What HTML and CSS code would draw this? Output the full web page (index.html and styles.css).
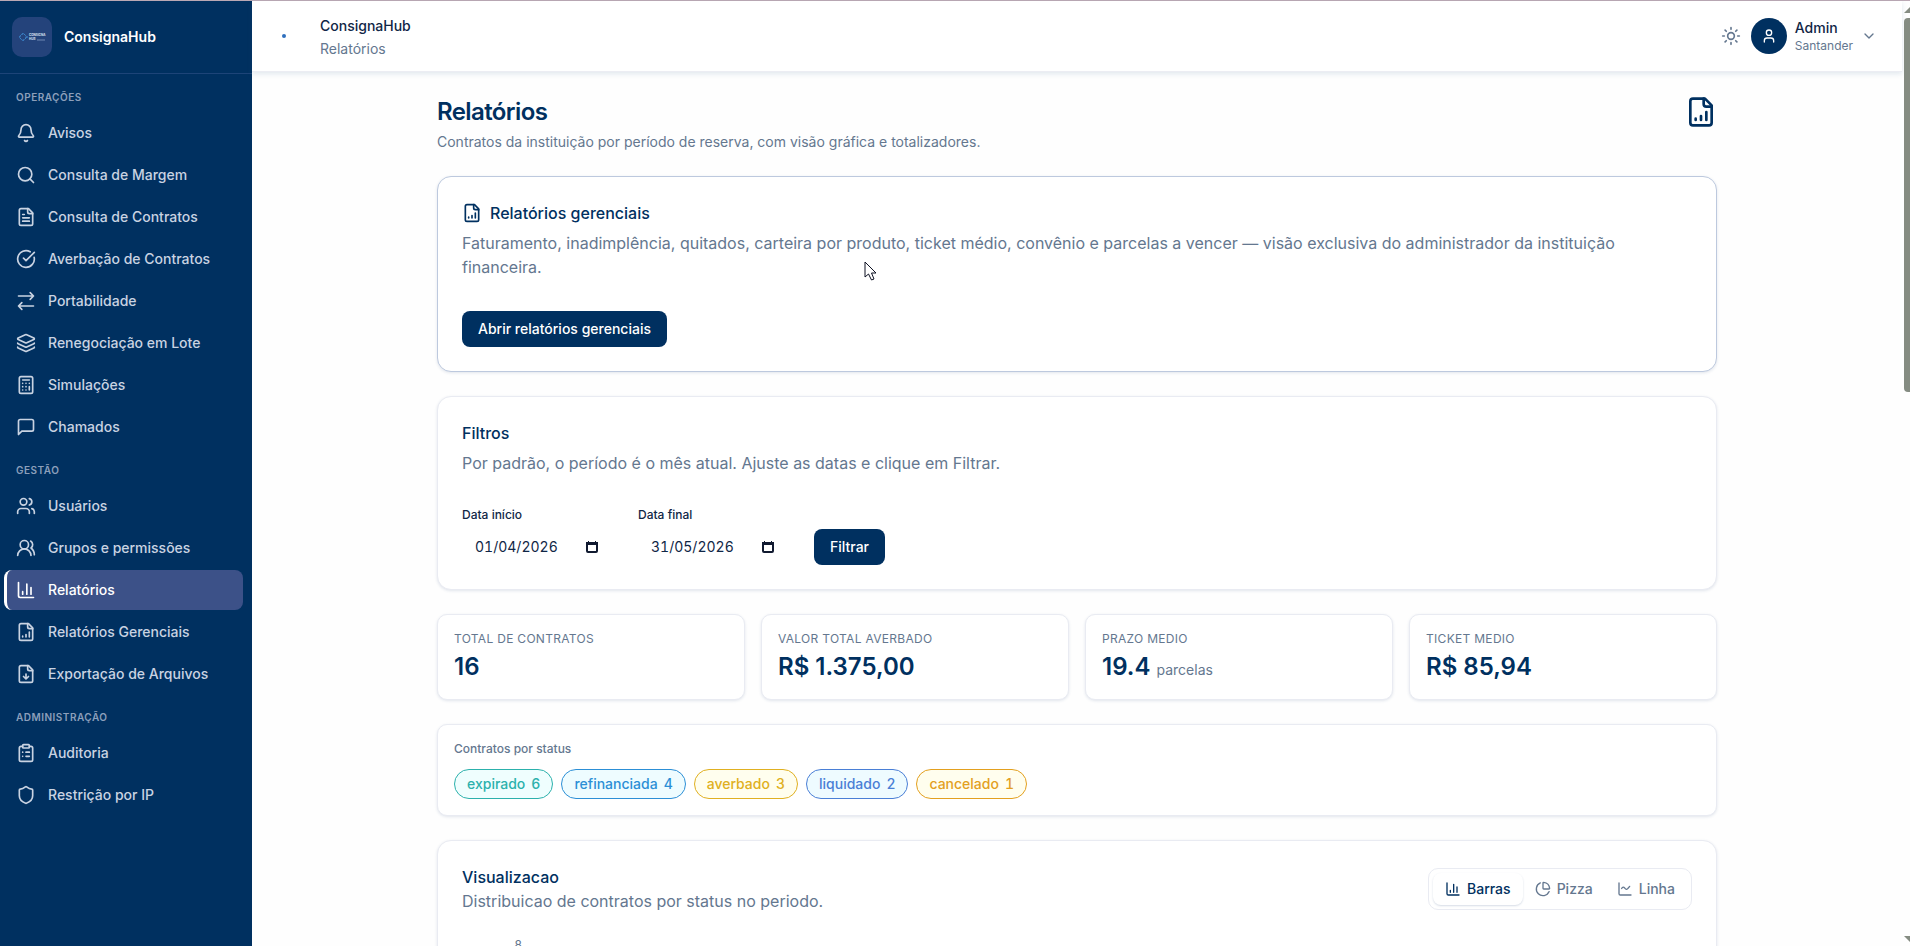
FILE: index.html
```html
<!DOCTYPE html>
<html lang="pt-BR">
<head>
  <meta charset="UTF-8">
  <meta name="viewport" content="width=device-width, initial-scale=1.0">
  <title>ConsignaHub - Relatórios</title>
  <link rel="stylesheet" href="styles.css">
</head>
<body>
  <svg class="sprite" aria-hidden="true">
    <symbol id="i-bell" viewBox="0 0 24 24"><path d="M10.268 21a2 2 0 0 0 3.464 0"/><path d="M3.262 15.326A1 1 0 0 0 4 17h16a1 1 0 0 0 .74-1.673C19.41 13.956 18 12.499 18 8A6 6 0 0 0 6 8c0 4.499-1.411 5.956-2.738 7.326"/></symbol>
    <symbol id="i-search" viewBox="0 0 24 24"><circle cx="11" cy="11" r="8"/><path d="m21 21-4.3-4.3"/></symbol>
    <symbol id="i-file" viewBox="0 0 24 24"><path d="M15 2H6a2 2 0 0 0-2 2v16a2 2 0 0 0 2 2h12a2 2 0 0 0 2-2V7Z"/><path d="M14 2v4a2 2 0 0 0 2 2h4"/></symbol>
    <symbol id="i-file-text" viewBox="0 0 24 24"><use href="#i-file"/><path d="M10 9H8M16 13H8M16 17H8"/></symbol>
    <symbol id="i-file-chart" viewBox="0 0 24 24"><use href="#i-file"/><path d="M8 18v-1M12 18v-3M16 18v-6"/></symbol>
    <symbol id="i-file-down" viewBox="0 0 24 24"><use href="#i-file"/><path d="M12 18v-6M9 15l3 3 3-3"/></symbol>
    <symbol id="i-check" viewBox="0 0 24 24"><path d="M21.801 10A10 10 0 1 1 17 3.335"/><path d="m9 11 3 3L22 4"/></symbol>
    <symbol id="i-arrows" viewBox="0 0 24 24"><path d="m17 2 4 4-4 4M3 6h18M7 22l-4-4 4-4M21 18H3"/></symbol>
    <symbol id="i-layers" viewBox="0 0 24 24"><path d="m12.83 2.18a2 2 0 0 0-1.66 0L2.6 6.08a1 1 0 0 0 0 1.83l8.58 3.91a2 2 0 0 0 1.66 0l8.58-3.9a1 1 0 0 0 0-1.83Z"/><path d="M2 12a1 1 0 0 0 .58.91l8.6 3.91a2 2 0 0 0 1.65 0l8.58-3.9A1 1 0 0 0 22 12"/><path d="M2 17a1 1 0 0 0 .58.91l8.6 3.91a2 2 0 0 0 1.65 0l8.58-3.9A1 1 0 0 0 22 17"/></symbol>
    <symbol id="i-calc" viewBox="0 0 24 24"><rect x="4" y="2" width="16" height="20" rx="2"/><path d="M8 6h8M16 14v4M16 10h.01M12 10h.01M8 10h.01M12 14h.01M8 14h.01M12 18h.01M8 18h.01"/></symbol>
    <symbol id="i-message" viewBox="0 0 24 24"><path d="M21 15a2 2 0 0 1-2 2H7l-4 4V5a2 2 0 0 1 2-2h14a2 2 0 0 1 2 2z"/></symbol>
    <symbol id="i-users" viewBox="0 0 24 24"><path d="M16 21v-2a4 4 0 0 0-4-4H6a4 4 0 0 0-4 4v2"/><circle cx="9" cy="7" r="4"/><path d="M22 21v-2a4 4 0 0 0-3-3.87M16 3.13a4 4 0 0 1 0 7.75"/></symbol>
    <symbol id="i-users-round" viewBox="0 0 24 24"><path d="M18 21a8 8 0 0 0-16 0"/><circle cx="10" cy="8" r="5"/><path d="M22 20c0-3.37-2-6.5-4-8a5 5 0 0 0-.45-8.3"/></symbol>
    <symbol id="i-bars" viewBox="0 0 24 24"><path d="M3 3v16a2 2 0 0 0 2 2h16M13 17V5M18 17V9M8 17v-3"/></symbol>
    <symbol id="i-pie" viewBox="0 0 24 24"><path d="M21 12c.552 0 1.005-.449.95-.998a10 10 0 0 0-8.953-8.951c-.55-.055-.998.398-.998.95v8a1 1 0 0 0 1 1z"/><path d="M21.21 15.89A10 10 0 1 1 8 2.83"/></symbol>
    <symbol id="i-line" viewBox="0 0 24 24"><path d="M3 3v16a2 2 0 0 0 2 2h16"/><path d="M7 11.2c1.300-2.900 3.200-2.500 4.700-.4s3.400 2.500 4.900.1L19 8"/></symbol>
    <symbol id="i-clipboard" viewBox="0 0 24 24"><rect x="8" y="2" width="8" height="4" rx="1"/><path d="M16 4h2a2 2 0 0 1 2 2v14a2 2 0 0 1-2 2H6a2 2 0 0 1-2-2V6a2 2 0 0 1 2-2h2M12 11h4M12 16h4M8 11h.01M8 16h.01"/></symbol>
    <symbol id="i-shield" viewBox="0 0 24 24"><path d="M20 13c0 5-3.500 7.500-7.660 8.950a1 1 0 0 1-.67-.01C7.500 20.500 4 18 4 13V6a1 1 0 0 1 1-1c2 0 4.500-1.200 6.240-2.720a1.170 1.170 0 0 1 1.520 0C14.510 3.810 17 5 19 5a1 1 0 0 1 1 1z"/></symbol>
    <symbol id="i-sun" viewBox="0 0 24 24"><circle cx="12" cy="12" r="4"/><path d="M12 2v2M12 20v2M4.930 4.930l1.410 1.410M17.660 17.660l1.410 1.410M2 12h2M20 12h2M6.340 17.660l-1.410 1.410M19.070 4.930l-1.410 1.410"/></symbol>
    <symbol id="i-user" viewBox="0 0 24 24"><path d="M19 21v-2a4 4 0 0 0-4-4H9a4 4 0 0 0-4 4v2"/><circle cx="12" cy="7" r="4"/></symbol>
    <symbol id="i-chevron" viewBox="0 0 24 24"><path d="m6 9 6 6 6-6"/></symbol>
  </svg>

  <div class="app">
    <aside class="sidebar">
      <div class="brand">
        <svg class="brand-logo" viewBox="0 0 40 40" aria-hidden="true">
          <circle class="logo-ring" cx="11" cy="20" r="3"/>
          <path class="logo-rays" d="M7 20h1M14 20h2M11 16v1M11 23v1"/>
          <text x="17" y="19">CONSIGNA</text>
          <text x="17" y="23">HUB</text>
          <path class="logo-line" d="M25 23h8"/>
        </svg>
        <span>ConsignaHub</span>
      </div>
      <nav>
        <h2 class="nav-label">Operações</h2>
        <ul>
          <li><a href="#"><svg class="icon"><use href="#i-bell"/></svg>Avisos</a></li>
          <li><a href="#"><svg class="icon"><use href="#i-search"/></svg>Consulta de Margem</a></li>
          <li><a href="#"><svg class="icon"><use href="#i-file-text"/></svg>Consulta de Contratos</a></li>
          <li><a href="#"><svg class="icon"><use href="#i-check"/></svg>Averbação de Contratos</a></li>
          <li><a href="#"><svg class="icon"><use href="#i-arrows"/></svg>Portabilidade</a></li>
          <li><a href="#"><svg class="icon"><use href="#i-layers"/></svg>Renegociação em Lote</a></li>
          <li><a href="#"><svg class="icon"><use href="#i-calc"/></svg>Simulações</a></li>
          <li><a href="#"><svg class="icon"><use href="#i-message"/></svg>Chamados</a></li>
        </ul>
        <h2 class="nav-label">Gestão</h2>
        <ul>
          <li><a href="#"><svg class="icon"><use href="#i-users"/></svg>Usuários</a></li>
          <li><a href="#"><svg class="icon"><use href="#i-users-round"/></svg>Grupos e permissões</a></li>
          <li><a href="#" class="active"><svg class="icon"><use href="#i-bars"/></svg>Relatórios</a></li>
          <li><a href="#"><svg class="icon"><use href="#i-file-chart"/></svg>Relatórios Gerenciais</a></li>
          <li><a href="#"><svg class="icon"><use href="#i-file-down"/></svg>Exportação de Arquivos</a></li>
        </ul>
        <h2 class="nav-label">Administração</h2>
        <ul>
          <li><a href="#"><svg class="icon"><use href="#i-clipboard"/></svg>Auditoria</a></li>
          <li><a href="#"><svg class="icon"><use href="#i-shield"/></svg>Restrição por IP</a></li>
        </ul>
      </nav>
    </aside>

    <div class="page">
      <header class="topbar">
        <span class="dot"></span>
        <div class="crumbs">
          <strong>ConsignaHub</strong>
          <span>Relatórios</span>
        </div>
        <button class="theme" type="button" aria-label="Alternar tema"><svg class="icon"><use href="#i-sun"/></svg></button>
        <button class="account" type="button">
          <span class="avatar"><svg class="icon icon-sm"><use href="#i-user"/></svg></span>
          <span class="account-text"><b>Admin</b><small>Santander</small></span>
          <svg class="icon icon-sm"><use href="#i-chevron"/></svg>
        </button>
      </header>

      <main>
        <div class="content">
          <div class="page-title">
            <div>
              <h1>Relatórios</h1>
              <p>Contratos da instituição por período de reserva, com visão gráfica e totalizadores.</p>
            </div>
            <svg class="icon icon-lg"><use href="#i-file-chart"/></svg>
          </div>

          <section class="card card-primary">
            <h3><svg class="icon"><use href="#i-file-chart"/></svg>Relatórios gerenciais</h3>
            <p class="desc">Faturamento, inadimplência, quitados, carteira por produto, ticket médio, convênio e parcelas a vencer — visão exclusiva do administrador da instituição financeira.</p>
            <button class="btn" type="button">Abrir relatórios gerenciais</button>
          </section>

          <section class="card">
            <h3>Filtros</h3>
            <p class="desc">Por padrão, o período é o mês atual. Ajuste as datas e clique em Filtrar.</p>
            <form class="filters">
              <div class="field">
                <label for="inicio">Data início</label>
                <div class="date">
                  <input type="text" id="inicio" value="01/04/2026">
                  <button type="button" aria-label="Abrir calendário"><svg viewBox="0 0 16 16"><rect x="3" y="4" width="10" height="9" rx="1"/><path class="bar" d="M2 3h12v3H2zM4 2h1v1H4zM11 2h1v1h-1z"/></svg></button>
                </div>
              </div>
              <div class="field">
                <label for="final">Data final</label>
                <div class="date">
                  <input type="text" id="final" value="31/05/2026">
                  <button type="button" aria-label="Abrir calendário"><svg viewBox="0 0 16 16"><rect x="3" y="4" width="10" height="9" rx="1"/><path class="bar" d="M2 3h12v3H2zM4 2h1v1H4zM11 2h1v1h-1z"/></svg></button>
                </div>
              </div>
              <button class="btn" type="button">Filtrar</button>
            </form>
          </section>

          <div class="stats">
            <div class="stat"><h4>Total de contratos</h4><p>16</p></div>
            <div class="stat"><h4>Valor total averbado</h4><p>R$ 1.375,00</p></div>
            <div class="stat"><h4>Prazo medio</h4><p>19.4 <small>parcelas</small></p></div>
            <div class="stat"><h4>Ticket medio</h4><p>R$ 85,94</p></div>
          </div>

          <section class="status">
            <h4>Contratos por status</h4>
            <div class="pills">
              <span class="pill teal">expirado <span>6</span></span>
              <span class="pill sky">refinanciada <span>4</span></span>
              <span class="pill yellow">averbado <span>3</span></span>
              <span class="pill blue">liquidado <span>2</span></span>
              <span class="pill amber">cancelado <span>1</span></span>
            </div>
          </section>

          <section class="card chart-card">
            <div class="chart-head">
              <div>
                <h3>Visualizacao</h3>
                <p class="chart-desc">Distribuicao de contratos por status no periodo.</p>
              </div>
              <div class="tabs">
                <button class="selected" type="button"><svg class="icon icon-sm"><use href="#i-bars"/></svg>Barras</button>
                <button type="button"><svg class="icon icon-sm"><use href="#i-pie"/></svg>Pizza</button>
                <button type="button"><svg class="icon icon-sm"><use href="#i-line"/></svg>Linha</button>
              </div>
            </div>
            <div class="axis">8</div>
          </section>
        </div>
      </main>
    </div>

    <div class="scrollbar" aria-hidden="true">
      <i class="arrow up"></i>
      <i class="thumb"></i>
      <i class="arrow down"></i>
    </div>
  </div>

  <svg class="pointer" viewBox="0 0 13 20" aria-hidden="true"><path d="M1 1v15l3.500-3 3 6 2.500-1-2.500-6H12z"/></svg>
</body>
</html>
```

FILE: styles.css
```css
:root {
  --navy: #003060;
  --ink: #102646;
  --muted: #64778f;
  --line: #e9ebf2;
}
* { box-sizing: border-box; }
body {
  margin: 0;
  font-family: Inter, "Liberation Sans", sans-serif;
  font-size: 14px;
  line-height: 20px;
  color: var(--ink);
  background: #fefefe;
  overflow: hidden;
}
h1, h2, h3, h4, p, ul { margin: 0; padding: 0; }
button, input { font: inherit; color: inherit; }
button {
  border: 0;
  background: none;
  padding: 0;
  cursor: pointer;
}
.sprite { display: none; }
.icon {
  width: 20px;
  height: 20px;
  flex: none;
  fill: none;
  stroke: currentColor;
  stroke-width: 2;
  stroke-linecap: round;
  stroke-linejoin: round;
}
.icon-sm { width: 16px; height: 16px; }
.icon-lg { width: 32px; height: 32px; color: var(--navy); }

.app {
  display: flex;
  height: 100vh;
  border-top: 1px solid #bba8b4;
}

/* sidebar */
.sidebar {
  width: 252px;
  flex: none;
  background: var(--navy);
  color: #c9d3e2;
}
.brand {
  display: flex;
  align-items: center;
  gap: 12px;
  height: 73px;
  padding: 0 12px;
  border-bottom: 1px solid #1d4478;
  color: #fff;
  font-weight: 600;
}
.brand-logo {
  width: 40px;
  height: 40px;
  border-radius: 10px;
  background: #24437b;
  fill: none;
}
.brand-logo text { fill: #dbe4f2; font-size: 3px; font-weight: 700; }
.logo-ring { stroke: #3f8fd6; stroke-width: 1; stroke-dasharray: 2 1; }
.logo-rays { stroke: #3f8fd6; }
.logo-line { stroke: #6f88b3; }
.nav-label {
  padding: 15px 16px 8px;
  font-size: 10px;
  line-height: 16px;
  font-weight: 600;
  letter-spacing: 0.05em;
  text-transform: uppercase;
  color: #8c9fbb;
}
.sidebar ul {
  display: flex;
  flex-direction: column;
  gap: 2px;
  padding: 0 9px 0 4px;
  list-style: none;
}
.sidebar a {
  display: flex;
  align-items: center;
  gap: 12px;
  height: 40px;
  padding: 0 9px;
  border-left: 3px solid transparent;
  border-radius: 8px;
  color: inherit;
  font-weight: 500;
  text-decoration: none;
}
.sidebar a.active {
  background: #3c5188;
  border-color: #fff;
  color: #fff;
}

/* top bar */
.page {
  flex: 1;
  min-width: 0;
  display: flex;
  flex-direction: column;
}
.topbar {
  display: flex;
  align-items: center;
  height: 71px;
  padding: 0 25px 0 30px;
  flex: none;
  border-bottom: 1px solid #ecedf3;
  box-shadow: 0 2px 5px rgba(60, 110, 150, 0.15);
  background: #fff;
}
.dot {
  width: 4px;
  height: 4px;
  border-radius: 50%;
  background: #2f6fbd;
}
.crumbs {
  display: flex;
  flex-direction: column;
  gap: 3px;
  margin: 2px auto 0 34px;
}
.crumbs strong { font-weight: 500; }
.crumbs span { color: var(--muted); }
.theme { display: flex; color: var(--muted); margin-right: 10px; }
.account {
  display: flex;
  align-items: center;
  gap: 8px;
  text-align: left;
}
.avatar {
  display: grid;
  place-items: center;
  width: 36px;
  height: 36px;
  border-radius: 50%;
  background: var(--navy);
  color: #fff;
}
.account-text { display: flex; flex-direction: column; }
.account-text b { font-weight: 500; line-height: 20px; }
.account-text small { font-size: 12px; line-height: 16px; color: var(--muted); }
.account > .icon { color: var(--muted); }

/* content */
main {
  flex: 1;
  min-height: 0;
  padding: 24px;
  overflow: hidden;
}
.content {
  display: flex;
  flex-direction: column;
  gap: 24px;
  max-width: 1280px;
  margin: 0 auto;
}
.page-title {
  display: flex;
  justify-content: space-between;
  align-items: flex-start;
}
.page-title h1 {
  font-size: 24px;
  line-height: 32px;
  font-weight: 600;
  letter-spacing: -0.025em;
  color: var(--navy);
}
.page-title p { margin-top: 4px; color: var(--muted); }
.card, .stat, .status {
  background: #fff;
  border: 1px solid var(--line);
  border-radius: 14px;
  box-shadow: 0 1px 3px rgba(50, 80, 130, 0.14);
}
.card { padding: 24px; }
.card-primary { border-color: #bdc9de; }
.card h3 {
  display: flex;
  align-items: center;
  gap: 8px;
  font-size: 16px;
  line-height: 24px;
  font-weight: 500;
  color: var(--navy);
}
.desc, .chart-desc {
  font-size: 16px;
  line-height: 24px;
  color: var(--muted);
}
.desc { margin: 6px 0 32px; }
.btn {
  height: 36px;
  padding: 0 16px;
  border-radius: 8px;
  background: var(--navy);
  color: #fff;
  font-weight: 500;
}
.filters {
  display: flex;
  align-items: flex-end;
  gap: 16px;
}
.field {
  display: flex;
  flex-direction: column;
  gap: 6px;
}
.field label { font-size: 12px; line-height: 16px; font-weight: 500; }
.date {
  display: flex;
  align-items: center;
  width: 160px;
  height: 36px;
  padding: 0 22px 0 13px;
}
.date input {
  flex: 1;
  width: 0;
  border: 0;
  padding: 0;
  background: none;
  font-variant-numeric: tabular-nums;
}
.date button { display: flex; }
.date svg { width: 16px; height: 16px; fill: none; stroke: #111a30; stroke-width: 2; }
.date .bar { fill: #111a30; stroke: none; }

.stats {
  display: grid;
  grid-template-columns: repeat(4, 1fr);
  gap: 16px;
}
.stat, .status { padding: 16px; border-radius: 10px; }
.stat h4, .status h4 {
  font-size: 12px;
  line-height: 16px;
  font-weight: 500;
  color: var(--muted);
}
.stat h4 {
  font-weight: 400;
  letter-spacing: 0.025em;
  text-transform: uppercase;
}
.stat p {
  margin-top: 4px;
  font-size: 24px;
  line-height: 32px;
  font-weight: 600;
  color: var(--navy);
}
.stat small {
  font-size: 14px;
  line-height: 20px;
  font-weight: 400;
  color: var(--muted);
}
.pills {
  display: flex;
  flex-wrap: wrap;
  gap: 8px;
  margin-top: 12px;
}
.pill {
  display: flex;
  gap: 6px;
  padding: 4px 12px;
  border: 1px solid currentColor;
  border-radius: 15px;
  font-weight: 500;
  font-variant-numeric: tabular-nums;
}
.teal { color: #2cb1ac; background: #effefe; }
.sky { color: #2c8fd6; background: #eefcff; }
.yellow { color: #e0b021; background: #fffeee; }
.blue { color: #4a7fd6; background: #eefbff; }
.amber { color: #e3a01f; background: #fffeee; }

.chart-head {
  display: flex;
  justify-content: space-between;
  align-items: center;
}
.tabs {
  display: flex;
  padding: 4px;
  border: 1px solid var(--line);
  border-radius: 10px;
}
.tabs button {
  display: flex;
  align-items: center;
  gap: 6px;
  height: 32px;
  padding: 0 12px;
  border-radius: 8px;
  color: var(--muted);
  font-weight: 500;
}
.tabs .selected {
  color: var(--navy);
  box-shadow: 0 1px 2px rgba(50, 80, 130, 0.2);
}
.axis {
  width: 60px;
  margin-top: 24px;
  font-size: 12px;
  line-height: 16px;
  text-align: right;
  color: var(--muted);
}

.scrollbar {
  display: flex;
  flex-direction: column;
  align-items: flex-end;
  width: 8px;
  flex: none;
  padding: 6px 0 4px;
}
.thumb {
  width: 6px;
  height: 40%;
  margin: 5px 0 auto;
  border-radius: 4px 0 0 4px;
  background: #858c82;
}
.arrow {
  width: 0;
  height: 0;
  border: solid transparent;
  border-width: 0 0 6px 6px;
}
.up { border-bottom-color: #858c82; }
.down { border-width: 6px 0 0 6px; border-top-color: #858c82; }

.pointer {
  position: fixed;
  left: 864px;
  top: 261px;
  width: 13px;
  height: 20px;
  fill: #fff;
  stroke: #0c1022;
}
```
